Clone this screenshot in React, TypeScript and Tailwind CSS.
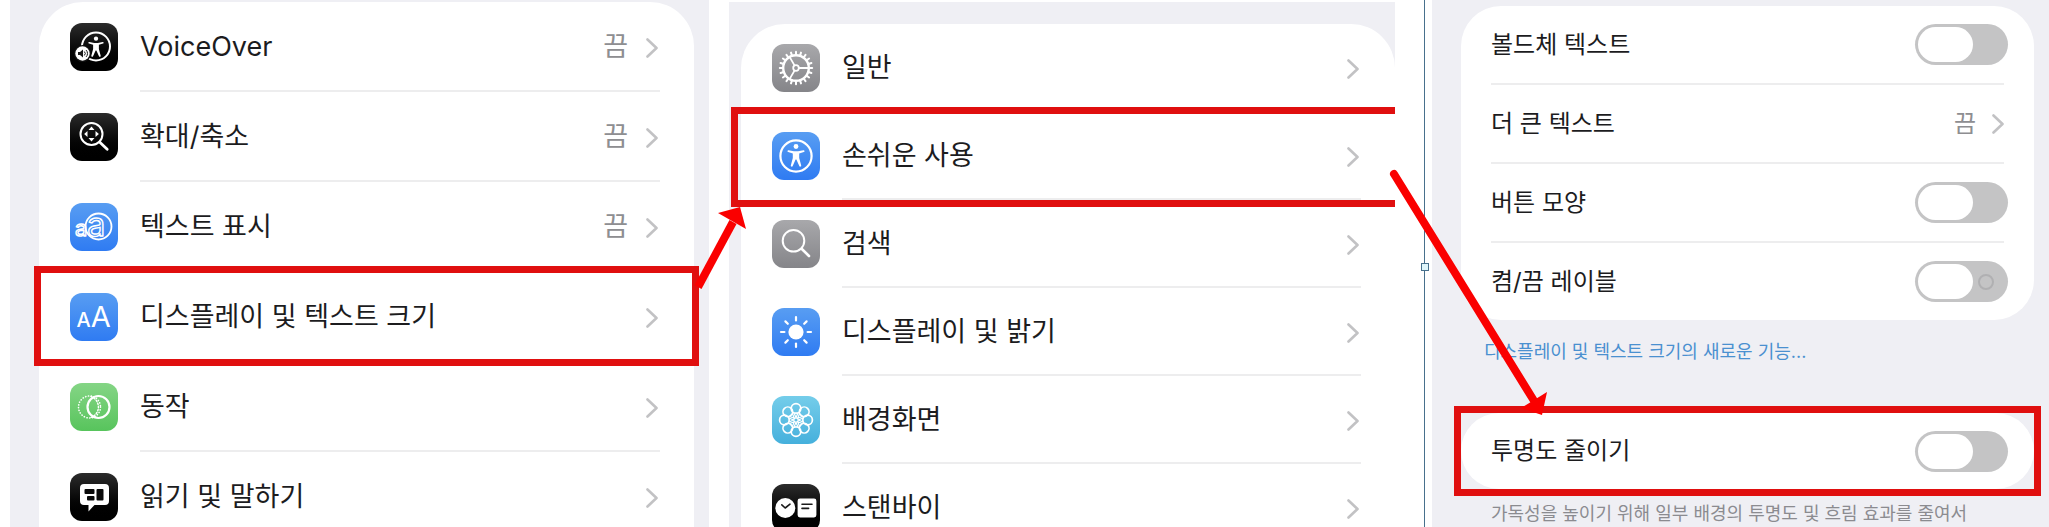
import React from 'react';

type Row = {
  label: string;
  icon: React.ReactNode;
  tile: string;
  value?: string;
  highlighted?: boolean;
};

const BLACK = 'bg-linear-to-b from-[#2c2c2c] to-[#000000]';
const BLUE = 'bg-linear-to-b from-[#589df2] to-[#2f7bf2]';
const GRAY = 'bg-linear-to-b from-[#a8a8ab] to-[#858589]';
const GREEN = 'bg-linear-to-b from-[#84d585] to-[#57c45c]';
const CYAN = 'bg-linear-to-b from-[#74cdea] to-[#45b0dc]';

const Glyph = ({ children }: { children: React.ReactNode }) => (
  <svg viewBox="0 0 48 48" className="size-12" fill="none" stroke="white" strokeWidth="2" strokeLinecap="round" strokeLinejoin="round" aria-hidden="true">
    {children}
  </svg>
);

const Person = () => (
  <>
    <circle cx="24" cy="14.5" r="2.4" fill="white" stroke="none" />
    <path
      d="M16.6 18.2 L22 19.3 H26 L31.4 18.2 A0.9 0.9 0 0 1 31.8 20 L27.2 21.4 V26 L29.2 33.4 A1 1 0 0 1 27.3 34 L24.4 27.6 H23.6 L20.7 34 A1 1 0 0 1 18.8 33.4 L20.8 26 V21.4 L16.2 20 A0.9 0.9 0 0 1 16.6 18.2 Z"
      fill="white"
      stroke="none"
    />
  </>
);

const VoiceOverIcon = () => (
  <Glyph>
    <circle cx="26" cy="23.5" r="14" />
    <g transform="translate(4.4 2.6) scale(0.9)">
      <Person />
    </g>
    <circle cx="12.5" cy="30.5" r="8.6" fill="#111111" stroke="none" />
    <circle cx="12.5" cy="30.5" r="7.2" fill="white" stroke="none" />
    <path d="M8 29 h2 l3 -2.6 v8.2 l-3 -2.6 h-2 Z" fill="#1a1a1a" stroke="none" />
    <path d="M14.6 28.8 a2.4 2.4 0 0 1 0 3.4 M16.4 27.4 a4.4 4.4 0 0 1 0 6.2" stroke="#1a1a1a" strokeWidth="1" />
  </Glyph>
);

const ZoomIcon = () => (
  <Glyph>
    <circle cx="21.5" cy="21" r="11" />
    <path d="M29.8 29.3 L37.2 36.2" strokeWidth="2.8" />
    <path d="M21.5 13.6 l3 3.4 h-6 Z M21.5 28.4 l3 -3.4 h-6 Z M14.1 21 l3.4 -3 v6 Z M28.9 21 l-3.4 -3 v6 Z" fill="white" stroke="none" />
  </Glyph>
);

const HoverTextIcon = () => (
  <Glyph>
    <circle cx="28.5" cy="23.5" r="13" strokeWidth="1.8" />
    <text x="5" y="33" strokeWidth="1.4" className="font-['Inter']">
      <tspan fontSize="22">a</tspan>
      <tspan fontSize="32">a</tspan>
    </text>
  </Glyph>
);

const TextSizeIcon = () => (
  <Glyph>
    <text x="6.5" y="33.5" fill="white" stroke="none" className="font-['Inter']">
      <tspan fontSize="20" fontWeight="500">A</tspan>
      <tspan fontSize="29">A</tspan>
    </text>
  </Glyph>
);

const MotionIcon = () => (
  <Glyph>
    <circle cx="19.5" cy="24" r="11" strokeWidth="1.6" strokeDasharray="0.2 2.6" />
    <path d="M21 13.6 A11 11 0 0 1 21 34.4" strokeWidth="1.4" strokeDasharray="1.4 1.8" />
    <circle cx="28.5" cy="24" r="11" strokeWidth="2.2" />
  </Glyph>
);

const SpeechIcon = () => (
  <Glyph>
    <path d="M14 11 H35 A4 4 0 0 1 39 15 V28 A4 4 0 0 1 35 32 H24.5 L18.5 38.4 V32 H14 A4 4 0 0 1 10 28 V15 A4 4 0 0 1 14 11 Z" fill="white" stroke="none" />
    <g fill="#0a0a0a" stroke="none">
      <rect x="14.5" y="16" width="10" height="5" rx="1" />
      <rect x="17" y="23" width="7.5" height="4.6" rx="1" />
      <rect x="26.5" y="16" width="7" height="11.6" rx="1" />
    </g>
  </Glyph>
);

const TEETH = Array.from({ length: 20 }, (_, i) => i * 18);

const GearIcon = () => (
  <Glyph>
    <circle cx="24" cy="24" r="12.8" strokeWidth="2.4" />
    {TEETH.map((deg) => (
      <path key={deg} d="M37 24 H40.2" strokeWidth="2" transform={`rotate(${deg} 24 24)`} />
    ))}
    <circle cx="24" cy="24" r="2.8" strokeWidth="1.8" />
    {[0, 120, 240].map((deg) => (
      <path key={deg} d="M27 24 H36" strokeWidth="1.8" transform={`rotate(${deg} 24 24)`} />
    ))}
  </Glyph>
);

const AccessibilityIcon = () => (
  <Glyph>
    <circle cx="24" cy="24" r="15.6" strokeWidth="2.2" />
    <Person />
  </Glyph>
);

const SearchIcon = () => (
  <Glyph>
    <circle cx="21.5" cy="20.8" r="10.8" />
    <path d="M29.6 28.8 L37 36" strokeWidth="2.6" />
  </Glyph>
);

const SunIcon = () => (
  <Glyph>
    <circle cx="24" cy="24" r="7.6" fill="white" stroke="none" />
    {[0, 45, 90, 135, 180, 225, 270, 315].map((deg) => (
      <path key={deg} d="M35.6 24 H39" strokeWidth="2.2" transform={`rotate(${deg} 24 24)`} />
    ))}
  </Glyph>
);

const WallpaperIcon = () => (
  <Glyph>
    {[0, 45, 90, 135, 180, 225, 270, 315].map((deg) => (
      <g key={deg} transform={`rotate(${deg} 24 24)`}>
        <circle cx="35.6" cy="24" r="4.8" strokeWidth="1.7" />
        <path d="M26.4 24 L31 22 M26.4 24 L31 26" strokeWidth="1.2" />
      </g>
    ))}
    <circle cx="24" cy="24" r="2.2" strokeWidth="1.2" />
  </Glyph>
);

const StandByIcon = () => (
  <Glyph>
    <circle cx="13.3" cy="24" r="10" fill="white" stroke="none" />
    <path d="M9.8 20.8 L13.2 24 L18 20.2" stroke="#1a1a1a" strokeWidth="1.6" />
    <rect x="25.6" y="14.6" width="18.8" height="18.8" rx="2.4" fill="white" stroke="none" />
    <path d="M30 20.2 H40 M30 24.4 H36.6" stroke="#1a1a1a" strokeWidth="1.6" />
  </Glyph>
);

const Chevron = () => (
  <svg viewBox="0 0 12 20" className="w-3 h-5 shrink-0" fill="none" stroke="#c2c2c4" strokeWidth="2.6" strokeLinecap="round" strokeLinejoin="round" aria-hidden="true">
    <path d="M1.5 1.5 L10.5 10 L1.5 18.5" />
  </svg>
);

const accessibilityRows: Row[] = [
  { label: 'VoiceOver', icon: <VoiceOverIcon />, tile: BLACK, value: '끔' },
  { label: '확대/축소', icon: <ZoomIcon />, tile: BLACK, value: '끔' },
  { label: '텍스트 표시', icon: <HoverTextIcon />, tile: BLUE, value: '끔' },
  { label: '디스플레이 및 텍스트 크기', icon: <TextSizeIcon />, tile: BLUE, highlighted: true },
  { label: '동작', icon: <MotionIcon />, tile: GREEN },
  { label: '읽기 및 말하기', icon: <SpeechIcon />, tile: BLACK },
];

const settingsRows: Row[] = [
  { label: '일반', icon: <GearIcon />, tile: GRAY },
  { label: '손쉬운 사용', icon: <AccessibilityIcon />, tile: BLUE, highlighted: true },
  { label: '검색', icon: <SearchIcon />, tile: GRAY },
  { label: '디스플레이 및 밝기', icon: <SunIcon />, tile: BLUE },
  { label: '배경화면', icon: <WallpaperIcon />, tile: CYAN },
  { label: '스탠바이', icon: <StandByIcon />, tile: BLACK },
];

const MenuList = ({ rows, rowHeight, frame }: { rows: Row[]; rowHeight: string; frame: string }) => (
  <ul>
    {rows.map((row) => (
      <li key={row.label} className="relative">
        <button type="button" className={`w-full flex items-center gap-[22px] pl-[31px] pr-[34px] text-left ${rowHeight}`}>
          <span className={`size-12 rounded-xl shrink-0 ${row.tile}`}>{row.icon}</span>
          <span className="flex-1 self-stretch flex items-center pt-[3px] pr-[2px] border-b-2 border-[#ededee] text-[27px] whitespace-nowrap">
            <span className="flex-1">{row.label}</span>
            {row.value && <span className="mr-[18px] text-[#8e8e91]">{row.value}</span>}
            <Chevron />
          </span>
        </button>
        {row.highlighted && <span className={`absolute border-[#e00f0f] pointer-events-none ${frame}`} />}
      </li>
    ))}
  </ul>
);

const Toggle = ({ id, showLabel }: { id: string; showLabel?: boolean }) => (
  <input
    id={id}
    type="checkbox"
    role="switch"
    className={`appearance-none relative w-[93px] h-[41px] shrink-0 rounded-full bg-[#c4c4c5] before:absolute before:left-[3px] before:top-[3px] before:w-[55px] before:h-[35px] before:rounded-full before:bg-white checked:bg-[#57c45c] checked:before:left-[35px] ${
      showLabel ? 'after:absolute after:right-[14px] after:top-[13px] after:size-4 after:rounded-full after:border-2 after:border-[#b0b0b2]' : ''
    }`}
  />
);

const ToggleRow = ({ id, label, showLabel }: { id: string; label: string; showLabel?: boolean }) => (
  <>
    <label htmlFor={id} className="flex-1">{label}</label>
    <div className="-mr-1 flex">
      <Toggle id={id} showLabel={showLabel} />
    </div>
  </>
);

const DisplayOptions = () => {
  const line = 'h-[79px] flex items-center border-b-2 border-[#ededee]';

  return (
    <div className="text-2xl whitespace-nowrap">
      <div className="rounded-[40px] bg-white px-[30px]">
        <div className={line}><ToggleRow id="bold" label="볼드체 텍스트" /></div>
        <button type="button" className={`w-full text-left ${line}`}>
          <span className="flex-1">더 큰 텍스트</span>
          <span className="mr-4 text-[#8e8e91]">끔</span>
          <Chevron />
        </button>
        <div className={line}><ToggleRow id="shapes" label="버튼 모양" /></div>
        <div className="h-[77px] flex items-center"><ToggleRow id="onoff" label="켬/끔 레이블" showLabel /></div>
      </div>
      <a href="#new" className="mt-5 ml-[23px] block text-lg leading-6 text-[#4a90d0]">디스플레이 및 텍스트 크기의 새로운 기능...</a>
      <div className="relative mt-[49px] h-[76px] flex items-center rounded-full bg-white px-[30px]">
        <ToggleRow id="transparency" label="투명도 줄이기" />
        <span className="absolute -inset-[7px] border-[7px] border-[#e00f0f] pointer-events-none" />
      </div>
      <p className="mt-[13px] ml-[30px] text-lg leading-6 text-[#8b8b90]">가독성을 높이기 위해 일부 배경의 투명도 및 흐림 효과를 줄여서</p>
    </div>
  );
};

// Step arrows that lead from one screen to the next.
const Arrows = () => (
  <svg viewBox="0 0 2049 527" preserveAspectRatio="none" className="absolute inset-0 w-full h-full pointer-events-none" aria-hidden="true">
    <g stroke="#fa0000" strokeWidth="8" fill="none">
      <path d="M698 287 L733 222" />
      <path d="M1394 174 L1536 404" strokeLinecap="round" />
    </g>
    <path d="M740 207 L746 229 L718 213 Z" fill="#fa0000" />
    <path d="M1542 415 L1547 392 L1521 408 Z" fill="#fa0000" />
  </svg>
);

export default function App() {
  return (
    <main className="relative h-screen overflow-hidden grid grid-cols-[699fr_20px_666fr_37px_617fr] bg-white pl-[10px] font-['Inter','Noto_Sans_CJK_KR',sans-serif] text-[#1c1c1e]">
      <section className="min-w-0 bg-[#efeff4] pt-[2px] pl-[29px] pr-[15px]">
        <div className="rounded-t-[44px] bg-white">
          <MenuList rows={accessibilityRows} rowHeight="h-[90px]" frame="-inset-x-[5px] -top-[6px] -bottom-1 border-[7px]" />
        </div>
      </section>

      <section className="col-start-3 min-w-0 mt-[2px] bg-[#efeff4] pt-[22px] pl-3">
        <div className="rounded-t-[44px] bg-white">
          <MenuList rows={settingsRows} rowHeight="h-[88px]" frame="-left-[10px] right-0 -top-[5px] -bottom-[7px] border-y-[7px] border-l-[7px]" />
        </div>
      </section>

      <div className="relative flex justify-center pl-[22px]">
        <span className="w-px bg-[#47708c]" />
        <span className="absolute left-[26px] top-[263px] size-2 border border-[#47708c] bg-[#dff6fb]" />
      </div>

      <section className="min-w-0 bg-[#efeff4] pt-[6px] pl-[29px] pr-[15px]">
        <DisplayOptions />
      </section>
      <Arrows />
    </main>
  );
}
